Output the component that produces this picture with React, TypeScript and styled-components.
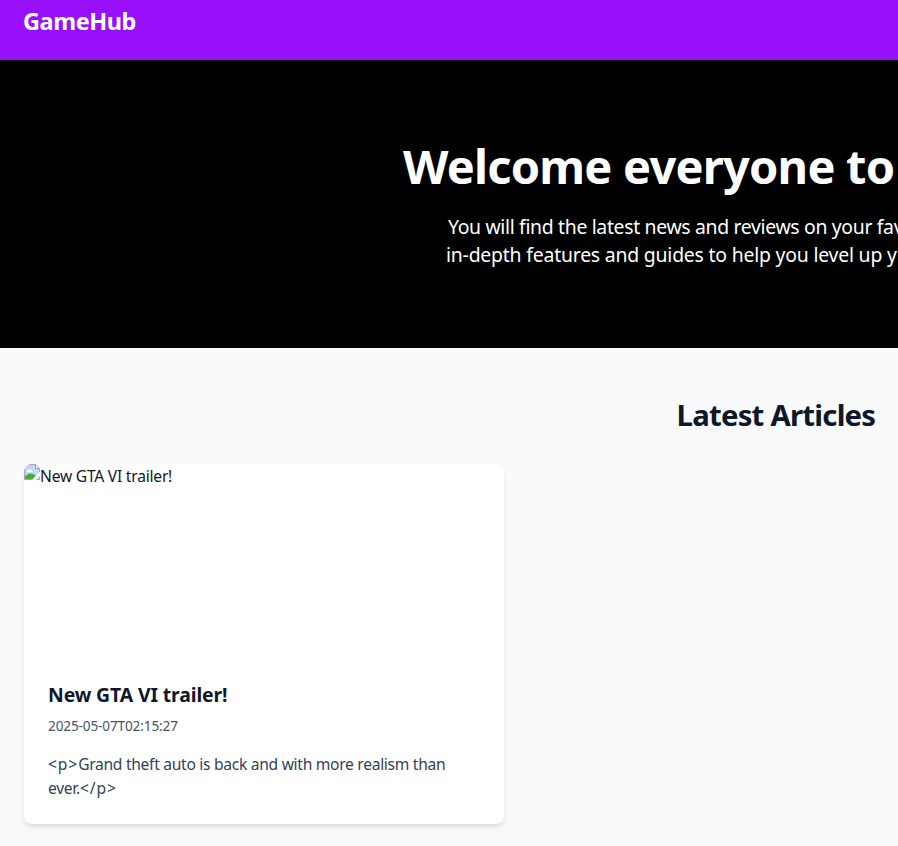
import React from 'react';
import styled, { createGlobalStyle } from 'styled-components';

const GlobalStyle = createGlobalStyle`
  *, *::before, *::after { box-sizing: border-box; }
  html, body { margin: 0; height: 100%; overflow: hidden; }
  body {
    background: #f8fafc;
    color: #0f172b;
    font-family: "Segoe UI", "Noto Sans", "Open Sans", sans-serif;
  }
  h1, h2, h3, p { margin: 0; }
`;

const Page = styled.div`
  width: 898px;
  height: 846px;
  overflow: hidden;
  background: #f8fafc;
`;

const Header = styled.header`
  height: 60px;
  padding: 5px 23px;
  background: #9810fa;
`;

const Logo = styled.div`
  color: #fff;
  font-size: 23.5px;
  font-weight: 700;
  line-height: 32px;
  letter-spacing: -0.45px;
`;

const Hero = styled.section`
  display: flex;
  flex-direction: column;
  gap: 25px;
  height: 288px;
  padding: 80px 0 79px 403px;
  background: #000;
  color: #fff;
  white-space: nowrap;
`;

const HeroTitle = styled.h1`
  height: 48px;
  padding-top: 2px;
  font-size: 47px;
  font-weight: 700;
  line-height: 48px;
  letter-spacing: -0.78px;
`;

const HeroText = styled.p`
  padding-left: 43px;
  font-size: 19.4px;
  line-height: 28px;
`;

const HeroLine = styled.span<{ $tracking: number; $indent?: number }>`
  display: block;
  padding-left: ${({ $indent = 0 }) => $indent}px;
  letter-spacing: ${({ $tracking }) => $tracking}px;
`;

const Articles = styled.main`
  display: flex;
  flex-direction: column;
  gap: 31px;
  padding: 49px 0 0 24px;
`;

const SectionTitle = styled.h2`
  padding-left: 652.5px;
  font-size: 29.3px;
  font-weight: 700;
  line-height: 36px;
  letter-spacing: -0.75px;
  white-space: nowrap;
`;

const Card = styled.article`
  width: 480px;
  height: 360px;
  overflow: hidden;
  border-radius: 8px;
  background: #fff;
  box-shadow: 0 4px 6px -1px rgba(0, 0, 0, 0.1), 0 2px 4px -2px rgba(0, 0, 0, 0.1);
`;

const Thumbnail = styled.div`
  display: flex;
  align-items: flex-start;
  height: 192px;
  font-size: 15.6px;
  line-height: 25px;
  letter-spacing: -0.22px;
`;

const CardBody = styled.div`
  padding: 25px 24px 24px;
`;

const CardTitle = styled.h3`
  margin-bottom: 7px;
  font-size: 19.4px;
  font-weight: 700;
  line-height: 28px;
  letter-spacing: -0.12px;
`;

const CardDate = styled.p`
  margin-bottom: 16px;
  color: #45556c;
  font-size: 13.6px;
  line-height: 20px;
  letter-spacing: -0.14px;
`;

const CardExcerpt = styled.p`
  color: #314158;
  font-size: 15.6px;
  line-height: 24px;
  letter-spacing: -0.29px;
`;

const Tag = styled.span`
  letter-spacing: 0.9px;
`;

const MissingImageIcon = () => (
  <svg width="16" height="16" viewBox="0 0 16 16" aria-hidden="true">
    <path d="M.5.5h11l4 4v11H.5z" fill="#c4d6f6" stroke="#a3a7ab" />
    <path d="M3 7.2c0-1.3 1.5-1.7 2-.9.4-1.4 2.6-1.1 2.6.5 1.2-.2 1.2 1.2.4 1.2H3.8C3.2 8 3 7.6 3 7.2z" fill="#fff" />
    <path d="M1 15v-2.2c2.2-3.2 6-4.2 9-2.3l2 1.5-3 3z" fill="#4fa83d" />
    <path d="M11.5.5v4h4z" fill="#fff" stroke="#a3a7ab" />
    <path d="M8 16l8-8.5V12l-4 4z" fill="#fff" />
  </svg>
);

export default function App() {
  return (
    <>
      <GlobalStyle />
      <Page>
        <Header>
          <Logo>GameHub</Logo>
        </Header>
        <Hero>
          <HeroTitle>Welcome everyone to</HeroTitle>
          <HeroText>
            <HeroLine $tracking={-0.33} $indent={2}>
              You will find the latest news and reviews on your fav
            </HeroLine>
            <HeroLine $tracking={-0.2}>
              in-depth features and guides to help you level up y
            </HeroLine>
          </HeroText>
        </Hero>
        <Articles>
          <SectionTitle>Latest Articles</SectionTitle>
          <Card>
            <Thumbnail>
              <MissingImageIcon />
              <span>New GTA VI trailer!</span>
            </Thumbnail>
            <CardBody>
              <CardTitle>New GTA VI trailer!</CardTitle>
              <CardDate>2025-05-07T02:15:27</CardDate>
              <CardExcerpt>
                <Tag>{'<p>'}</Tag>
                Grand theft auto is back and with more realism than ever.
                <Tag>{'</p>'}</Tag>
              </CardExcerpt>
            </CardBody>
          </Card>
        </Articles>
      </Page>
    </>
  );
}
